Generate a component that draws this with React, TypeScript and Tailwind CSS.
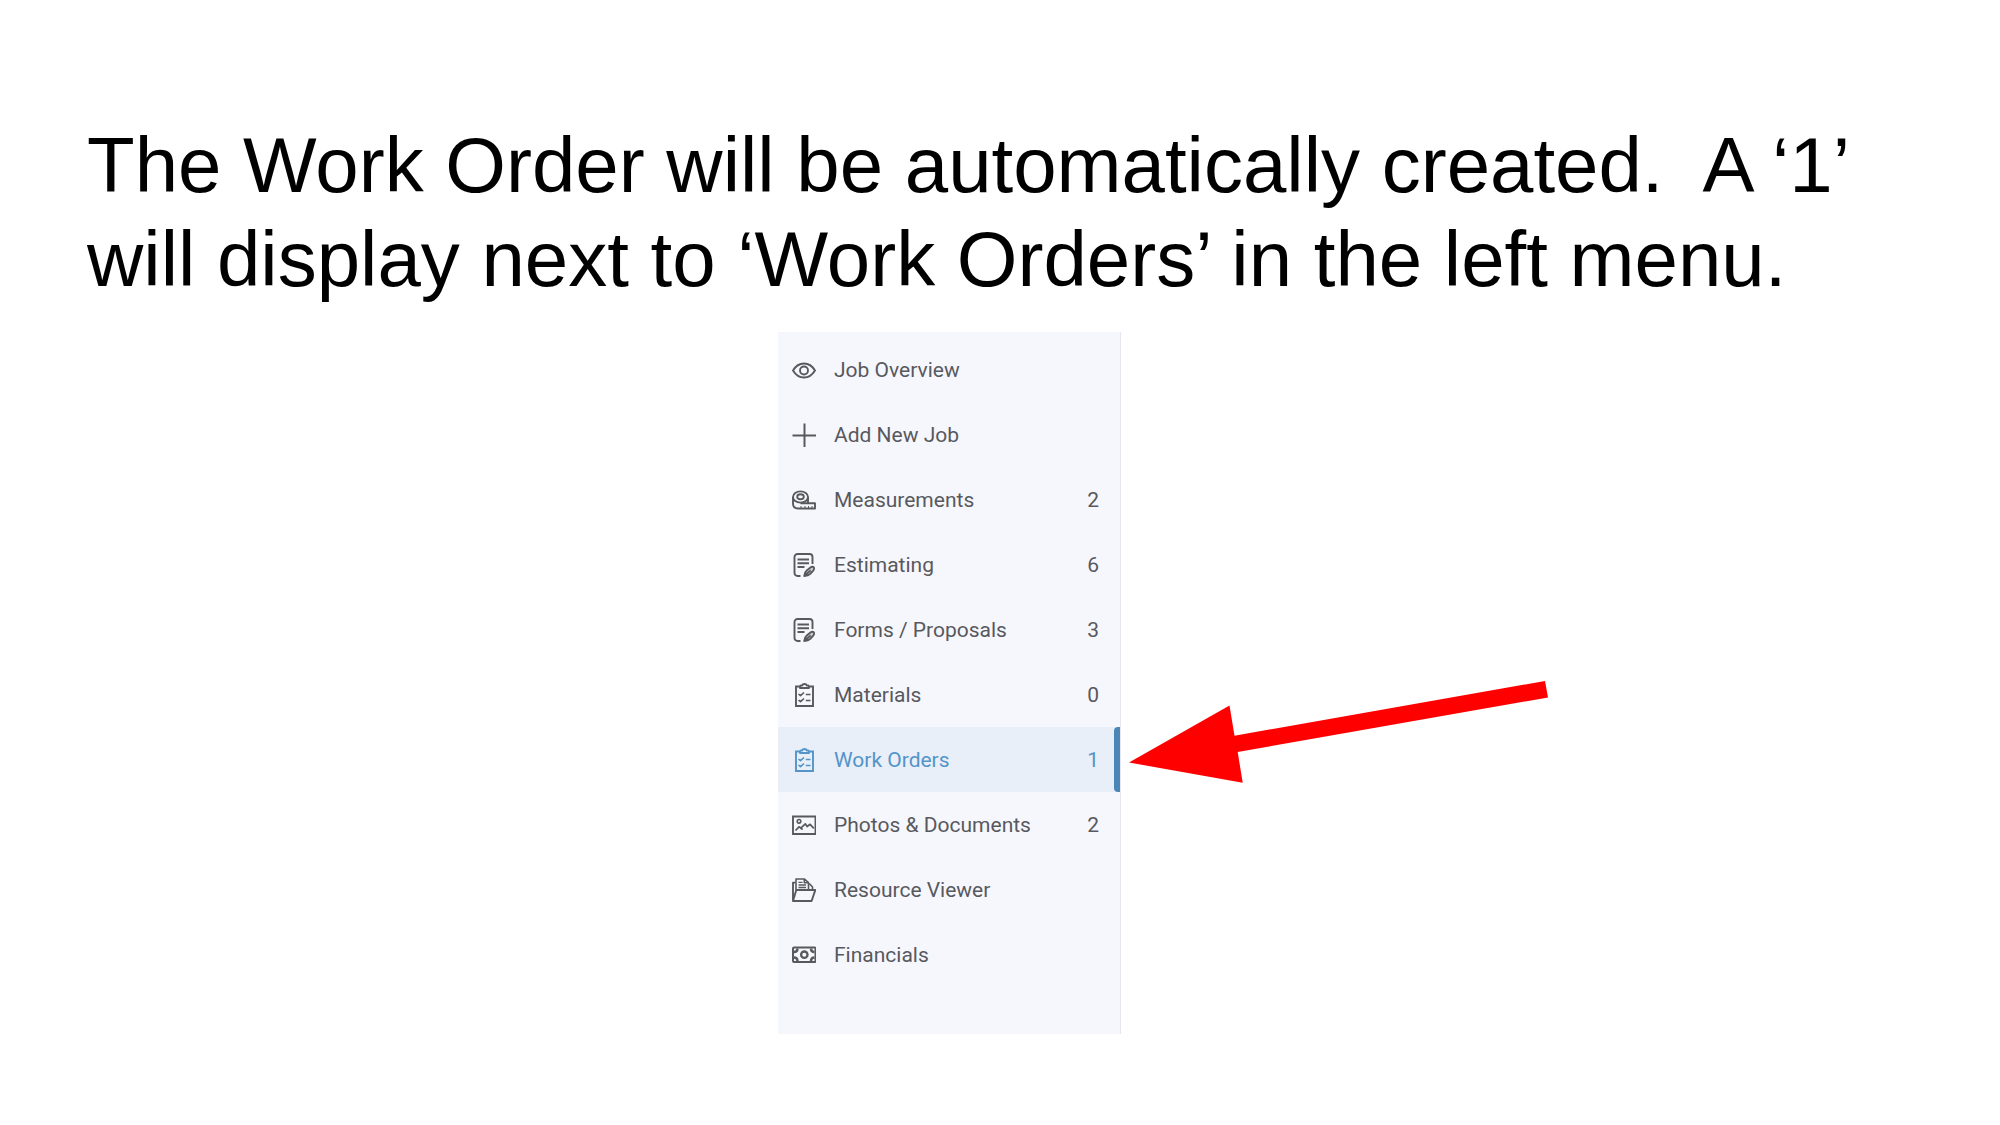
import type { ReactNode } from "react";

function Icon({ children }: { children: ReactNode }) {
  return (
    <svg
      viewBox="0 0 24 24"
      className="size-6 shrink-0"
      fill="none"
      stroke="currentColor"
      strokeWidth="1.9"
      strokeLinejoin="round"
      aria-hidden="true"
    >
      {children}
    </svg>
  );
}

const EyeIcon = () => (
  <Icon>
    <path d="M1 12.500C3.700 8 7.600 5.500 12 5.500s8.300 2.500 11 7c-2.700 4.500-6.600 7-11 7s-8.300-2.500-11-7Z" />
    <circle cx="12" cy="12.500" r="4" />
  </Icon>
);

const PlusIcon = () => (
  <Icon>
    <path d="M12.500 .5v23.500M.5 12.500h23.500" strokeWidth="2" />
  </Icon>
);

const TapeIcon = () => (
  <Icon>
    <ellipse cx="8.500" cy="9" rx="7.500" ry="5.600" />
    <ellipse cx="8.500" cy="8.800" rx="3.300" ry="2.500" />
    <path d="M1 9v6.500c0 3 2 5 5 5h17v-5.200H8.500" />
    <path d="M16 9v6.300" />
    <path d="M9 18v2.500M13 18v2.500M16.500 18v2.500M20 18v2.500" strokeWidth="1" />
  </Icon>
);

const DocEditIcon = () => (
  <Icon>
    <path d="M8.500 23H5.500a3 3 0 0 1-3-3V4a3 3 0 0 1 3-3h12a3 3 0 0 1 3 3v7" />
    <path d="M5.500 6.500h11.500M5.500 10.300h11.500M5.500 14h7" />
    <path
      d="M12.200 23c.2-2.600 1-4.400 2.800-5.800l3.800-2.900c1.200-.9 2.800-.6 3.200.3.400.9 0 2-.8 3l-2.900 3.300c-1.400 1.500-3.200 2.100-6.100 2.100Zm0 0 6.500-5.600"
      fill="currentColor"
      fillOpacity=".25"
    />
  </Icon>
);

const ClipboardIcon = () => (
  <Icon>
    <path d="M7.500 3.500H4V23h17V3.500h-3.500" strokeLinejoin="miter" />
    <path d="M8 5V3.400c0-.5.400-.9.900-.9h1.300C10.500 1.400 11.400 1 12.500 1s2 .4 2.300 1.500h1.300c.5 0 .9.400.9.900V5Z" />
    <path
      d="m6.500 11 2 1.700 3.500-3.200M6.500 17l2 1.700 3.500-3.200M13.800 11.500h4.700M13.800 17.500h4.700"
      strokeWidth="1.6"
    />
  </Icon>
);

const PhotoIcon = () => (
  <Icon>
    <path d="M1 3.500h22.500v17.500H1Z" strokeLinejoin="miter" />
    <circle cx="7" cy="8.300" r="1.800" strokeWidth="1.600" />
    <path d="M3.500 17.500 7 13.800l1.800 1.300 4.500-4.300 1.800 2.700 3-2.200 3.700 4" strokeWidth="1.700" />
    <path d="m8.800 15.100 1.800 1.600" strokeWidth="1.700" />
  </Icon>
);

const FolderIcon = () => (
  <Icon>
    <path d="M1 23V4.600h2.500M1 23l3.300-11h19L19.600 23Z" />
    <path d="M4 12V1h8.500l4 3.700V12M12.300 1v3.800h4" strokeWidth="1.600" />
    <path d="M16.500 6h1.200l2.800 3v3" strokeWidth="1.600" />
    <path d="M6.500 4.300h4M6.500 7h7.500M6.500 9.500h7.500" strokeWidth="1.300" />
  </Icon>
);

const CashIcon = () => (
  <Icon>
    <rect x="1" y="4.500" width="22.500" height="14.500" rx="1" strokeWidth="2" />
    <path
      d="M2 9c2 0 3.500-1.500 3.500-3.500M22.500 9c-2 0-3.500-1.500-3.500-3.500M2 14.500c2 0 3.500 1.500 3.500 3.500M22.500 14.500c-2 0-3.500 1.500-3.500 3.500"
      strokeWidth="2.400"
    />
    <circle cx="12.300" cy="11.700" r="3.200" strokeWidth="2.300" />
  </Icon>
);

type Item = { label: string; icon: () => ReactNode; count?: number; active?: boolean };

const items: Item[] = [
  { label: "Job Overview", icon: EyeIcon },
  { label: "Add New Job", icon: PlusIcon },
  { label: "Measurements", icon: TapeIcon, count: 2 },
  { label: "Estimating", icon: DocEditIcon, count: 6 },
  { label: "Forms / Proposals", icon: DocEditIcon, count: 3 },
  { label: "Materials", icon: ClipboardIcon, count: 0 },
  { label: "Work Orders", icon: ClipboardIcon, count: 1, active: true },
  { label: "Photos & Documents", icon: PhotoIcon, count: 2 },
  { label: "Resource Viewer", icon: FolderIcon },
  { label: "Financials", icon: CashIcon },
];

function MenuItem({ label, icon: ItemIcon, count, active }: Item) {
  return (
    <li className={active ? "flex bg-[#e8eff9] text-[#5494c8]" : "flex text-[#58595d]"}>
      <a
        href="#"
        aria-current={active ? "page" : undefined}
        className="flex h-[65px] grow items-center pl-3.5"
      >
        <ItemIcon />
        <span className="ml-[18px] grow whitespace-nowrap">{label}</span>
        {count !== undefined && <span>{count}</span>}
      </a>
      <span className={active ? "ml-[15px] w-1.5 rounded-l-sm bg-[#4b86b6]" : "ml-[15px] w-1.5"} />
    </li>
  );
}

export default function App() {
  return (
    <main className="min-h-screen bg-white pt-[118px] pb-20">
      <h1 className="px-[87px] font-['Liberation_Sans',Arial,sans-serif] text-[78px] leading-[94px] whitespace-pre-wrap text-black">
        {"The Work Order will be automatically created.  A ‘1’ will display next to ‘Work Orders’ in the left menu."}
      </h1>
      <div className="mt-[26px] ml-[38.9%] flex items-start">
        <nav
          aria-label="Job menu"
          className="w-[343px] shrink-0 border-r border-[#e6e6f2] bg-[#f6f7fd] pt-[5px] pb-[47px] font-[Roboto,sans-serif] text-[21px] leading-6"
        >
          <ul>
            {items.map((item) => (
              <MenuItem key={item.label} {...item} />
            ))}
          </ul>
        </nav>
        <svg
          viewBox="0 0 420 104"
          className="mt-[348px] ml-2 h-[104px] w-[420px] shrink-0"
          role="img"
          aria-label="Arrow pointing to Work Orders"
        >
          <path d="M0 82.500 100.500 25.500 105.500 55.700 416 1 419 17.500 108.700 72 113.700 102.800Z" fill="#ff0000" />
        </svg>
      </div>
    </main>
  );
}
